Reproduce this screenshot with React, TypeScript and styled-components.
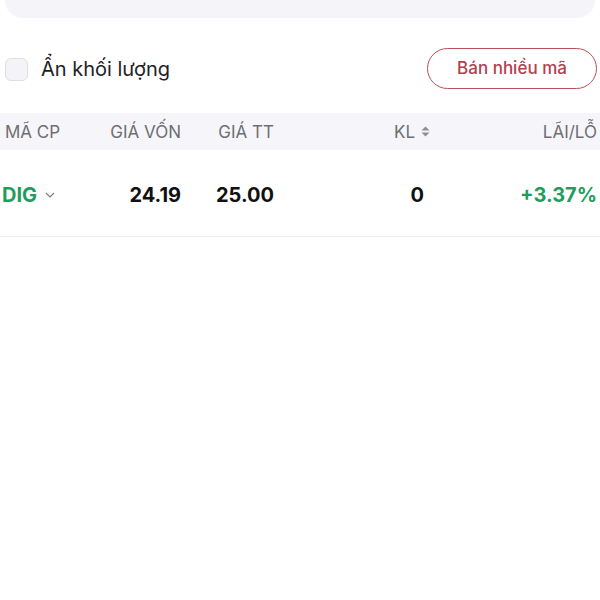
import React from "react";
import styled, { createGlobalStyle } from "styled-components";

const Global = createGlobalStyle`
  html, body { margin: 0; padding: 0; background: #ffffff; }
  body { font-family: Inter, "Noto Sans", Roboto, sans-serif; color: #1c1c1e; }
`;

const Page = styled.div`
  width: 600px;
  display: flex;
  flex-direction: column;
`;

const TopCard = styled.div`
  margin: 0 5px;
  height: 18px;
  background: #f4f4f9;
  border-radius: 0 0 18px 18px;
`;

const Toolbar = styled.div`
  display: flex;
  align-items: center;
  justify-content: space-between;
  padding: 30px 3px 0 5px;
  height: 40px;
`;

const CheckLabel = styled.label`
  display: flex;
  align-items: center;
  gap: 13px;
  font-size: 20px;
  color: #222226;
  padding-top: 2px;
`;

const CheckBox = styled.span`
  width: 23px;
  height: 23px;
  border-radius: 6px;
  border: 1px solid #dedee4;
  background: #f4f4f8;
  box-sizing: border-box;
`;

const OutlineButton = styled.button`
  width: 170px;
  height: 41px;
  border-radius: 21px;
  border: 1.5px solid #b8505b;
  background: #ffffff;
  color: #b3404d;
  font-family: Inter, "Noto Sans", sans-serif;
  font-size: 17px;
  font-weight: 500;
  padding: 0;
`;

const Grid = styled.div<{ $header?: boolean }>`
  display: grid;
  grid-template-columns: 100px 81px 93px 156px 167px;
  align-items: center;
  box-sizing: border-box;
  height: ${(p) => (p.$header ? "37px" : "87px")};
  background: ${(p) => (p.$header ? "#f6f6fa" : "#ffffff")};
  border-bottom: ${(p) => (p.$header ? "none" : "1px solid #ececee")};
  margin-top: ${(p) => (p.$header ? "25px" : "0")};
  padding: ${(p) => (p.$header ? "0 3px 0 0" : "4px 3px 0 0")};
`;

const HeadCell = styled.div<{ $align?: "left" | "right" }>`
  font-size: 17px;
  color: #6e6e73;
  display: flex;
  align-items: center;
  justify-content: ${(p) => (p.$align === "left" ? "flex-start" : "flex-end")};
  padding-left: ${(p) => (p.$align === "left" ? "5px" : "0")};
  gap: 6px;
`;

const Cell = styled.div<{ $green?: boolean; $inset?: number }>`
  font-size: 20px;
  font-weight: 700;
  text-align: right;
  color: ${(p) => (p.$green ? "#1f9d5c" : "#111114")};
  padding-right: ${(p) => p.$inset || 0}px;
`;

const SymbolCell = styled.div`
  display: flex;
  align-items: center;
  gap: 8px;
  padding-left: 2px;
  font-size: 20px;
  font-weight: 700;
  color: #1f9d5c;
`;

const SortIcon = () => (
  <svg width="9" height="11" viewBox="0 0 9 11">
    <path d="M4.5 0.5 L8.5 4.5 H0.5 Z" fill="#8e8e93" />
    <path d="M4.5 10.5 L8.5 6.5 H0.5 Z" fill="#8e8e93" />
  </svg>
);

const Chevron = () => (
  <svg width="10" height="6" viewBox="0 0 10 6">
    <path d="M1 1 L5 5 L9 1" fill="none" stroke="#7a7a80" strokeWidth="1.1" />
  </svg>
);

export default function App() {
  return (
    <Page>
      <Global />
      <TopCard />
      <Toolbar>
        <CheckLabel>
          <CheckBox />
          Ẩn khối lượng
        </CheckLabel>
        <OutlineButton>Bán nhiều mã</OutlineButton>
      </Toolbar>
      <Grid $header>
        <HeadCell $align="left">MÃ CP</HeadCell>
        <HeadCell>GIÁ VỐN</HeadCell>
        <HeadCell>GIÁ TT</HeadCell>
        <HeadCell>
          KL <SortIcon />
        </HeadCell>
        <HeadCell>LÃI/LỖ</HeadCell>
      </Grid>
      <Grid>
        <SymbolCell>
          DIG <Chevron />
        </SymbolCell>
        <Cell>24.19</Cell>
        <Cell>25.00</Cell>
        <Cell $inset={6}>0</Cell>
        <Cell $green>+3.37%</Cell>
      </Grid>
    </Page>
  );
}
